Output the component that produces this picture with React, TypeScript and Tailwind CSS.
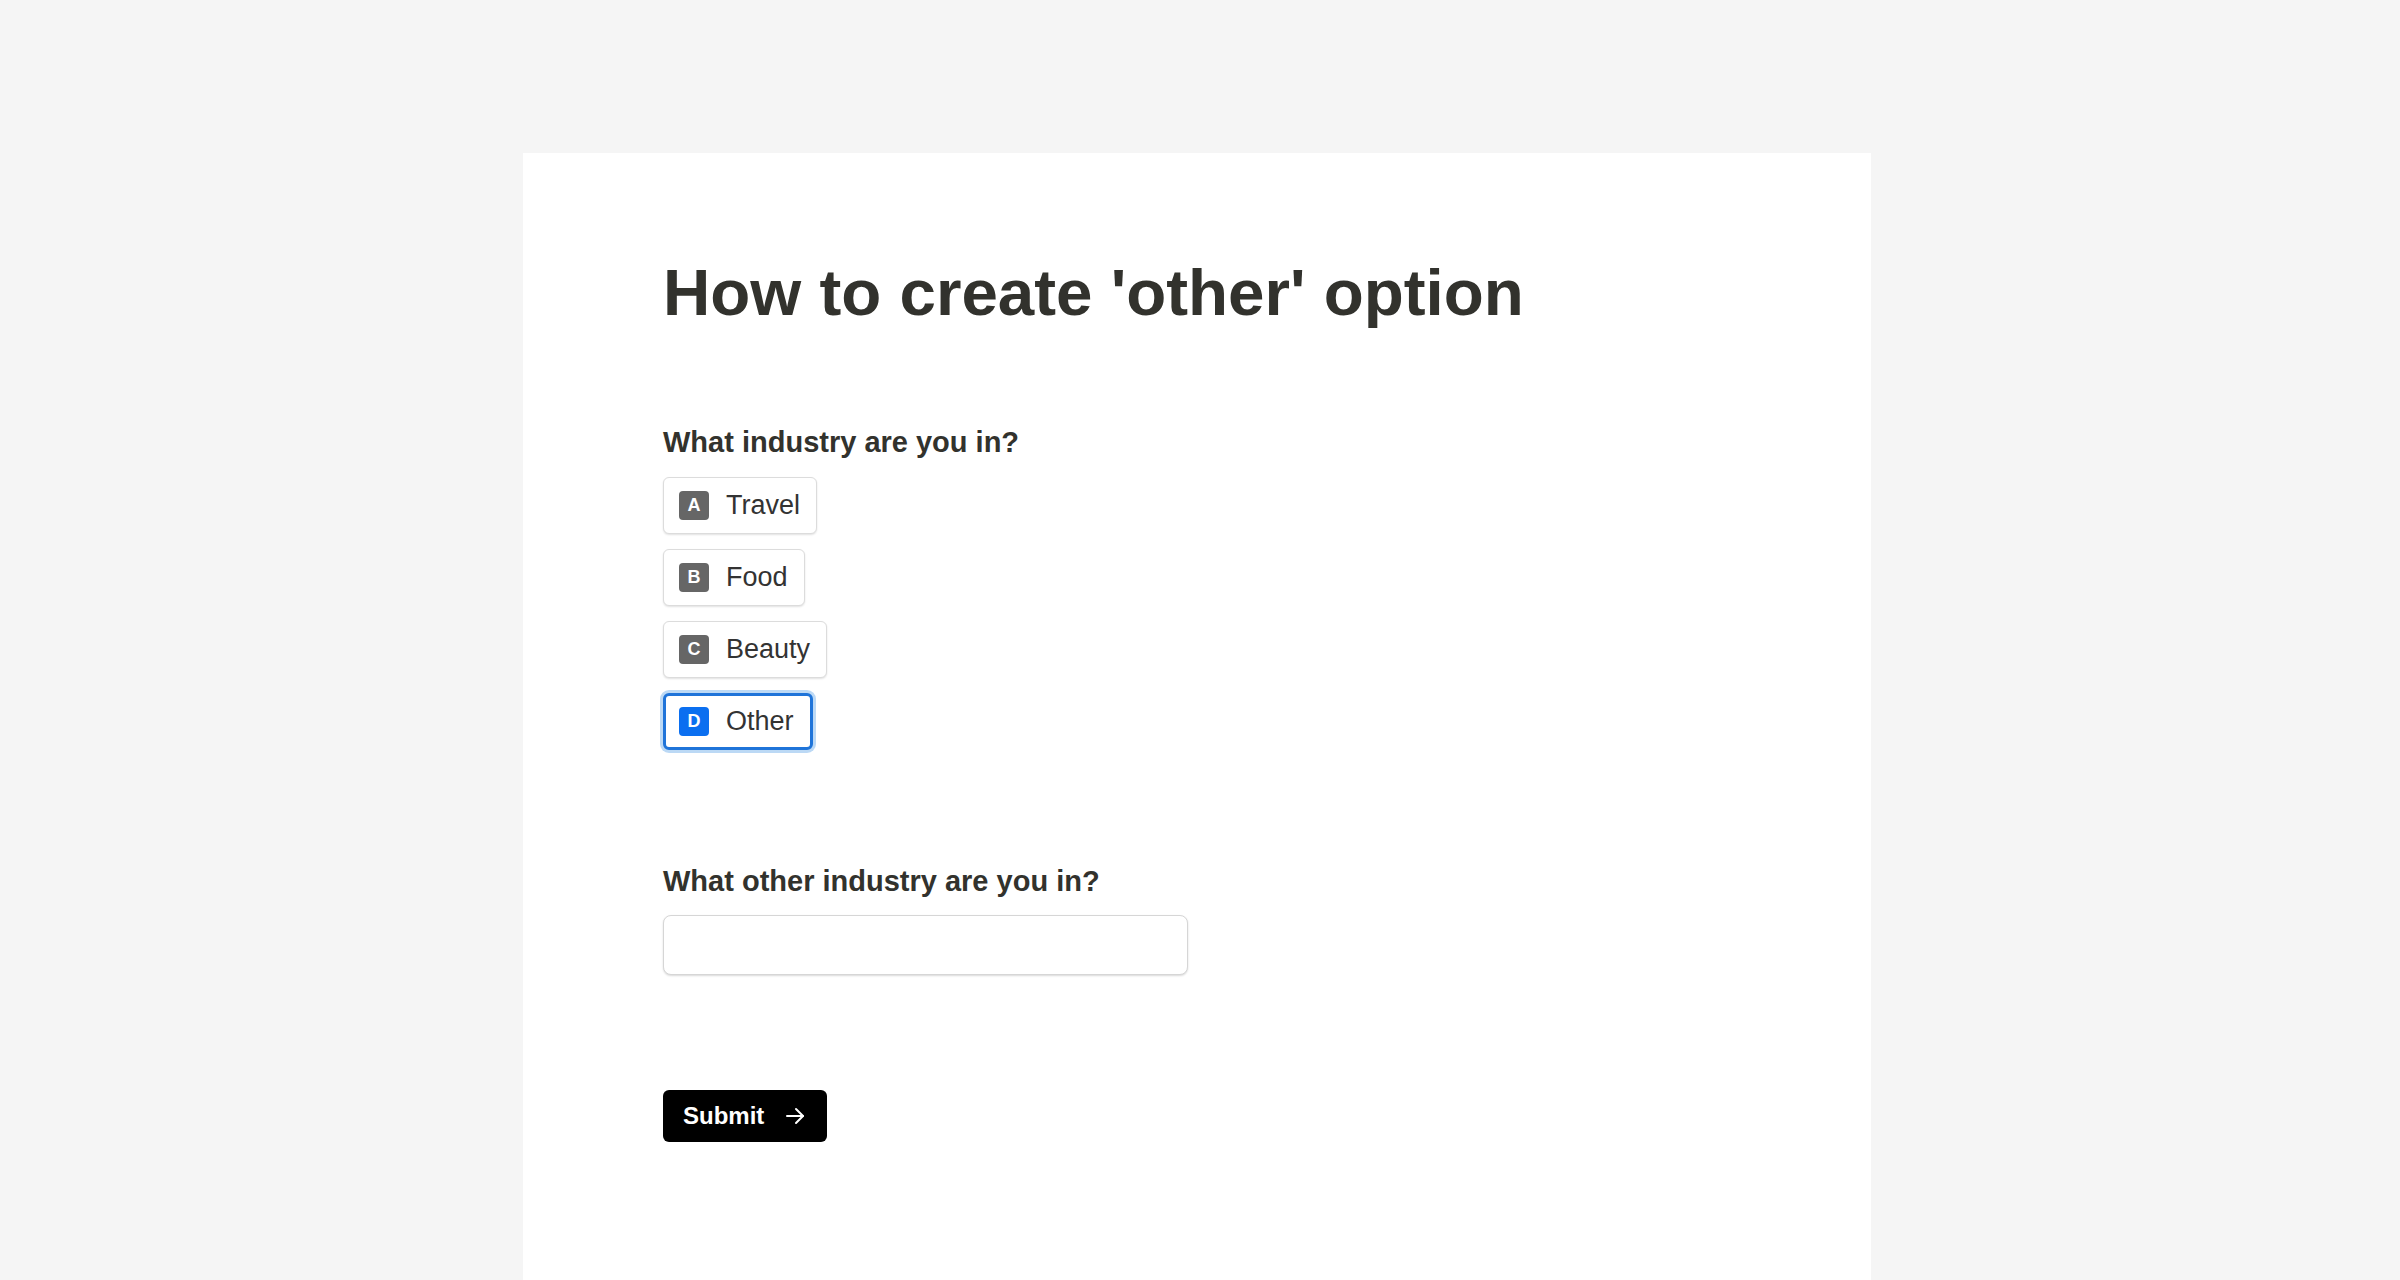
import React, { useState } from 'react';

const options = [
  { key: 'A', label: 'Travel' },
  { key: 'B', label: 'Food' },
  { key: 'C', label: 'Beauty' },
  { key: 'D', label: 'Other' },
];

export default function App() {
  const [selected, setSelected] = useState('D');
  const [other, setOther] = useState('');

  return (
    <div className="min-h-screen bg-[#f5f5f5] pt-[153px] font-['Liberation_Sans',Arial,sans-serif] text-[#32322d]">
      <div className="ml-[523px] w-[1348px] min-h-[1127px] bg-white pl-[140px] pt-[100px]">
        <h1 className="text-[65.5px] leading-[79px] font-bold">How to create 'other' option</h1>

        <h2 className="mt-[92px] text-[29px] leading-[36px] font-bold">What industry are you in?</h2>

        <div className="mt-[17px] flex flex-col items-start gap-[15px]">
          {options.map(opt => {
            const isSel = selected === opt.key;
            return (
              <button
                key={opt.key}
                onClick={() => setSelected(opt.key)}
                className={`flex h-[57px] items-center rounded-[6px] bg-white pr-[16px] ${
                  isSel
                    ? 'border-[3px] border-[#1f74d9] pl-[13px] ring-[3px] ring-[#bcd9f5] shadow-none'
                    : 'border border-[#dcdcdc] pl-[15px] shadow-[0_1px_2px_rgba(0,0,0,0.12)]'
                }`}
              >
                <span
                  className={`flex h-[29px] w-[30px] items-center justify-center rounded-[4px] text-[18px] font-bold text-white ${
                    isSel ? 'bg-[#0b6ff0]' : 'bg-[#666666]'
                  }`}
                >
                  {opt.key}
                </span>
                <span className="ml-[17px] text-[27px] leading-none text-[#333333]">{opt.label}</span>
              </button>
            );
          })}
        </div>

        {selected === 'D' && (
          <div className="mt-[113px]">
            <h2 className="text-[29px] leading-[36px] font-bold">What other industry are you in?</h2>
            <input
              value={other}
              onChange={e => setOther(e.target.value)}
              className="mt-[16px] block h-[60px] w-[525px] rounded-[8px] border border-[#d6d6d6] bg-white px-4 text-[24px] shadow-[0_1px_2px_rgba(0,0,0,0.15)] outline-none"
            />
          </div>
        )}

        <button className="mt-[115px] flex h-[52px] w-[164px] items-center rounded-[6px] bg-black pl-[20px] text-white">
          <span className="text-[24px] font-bold">Submit</span>
          <svg className="ml-[19px]" width="24" height="24" viewBox="0 0 24 24" fill="none" stroke="currentColor" strokeWidth="2" strokeLinecap="round" strokeLinejoin="round">
            <path d="M4 12h16" />
            <path d="M13 5l7 7-7 7" />
          </svg>
        </button>
      </div>
    </div>
  );
}
